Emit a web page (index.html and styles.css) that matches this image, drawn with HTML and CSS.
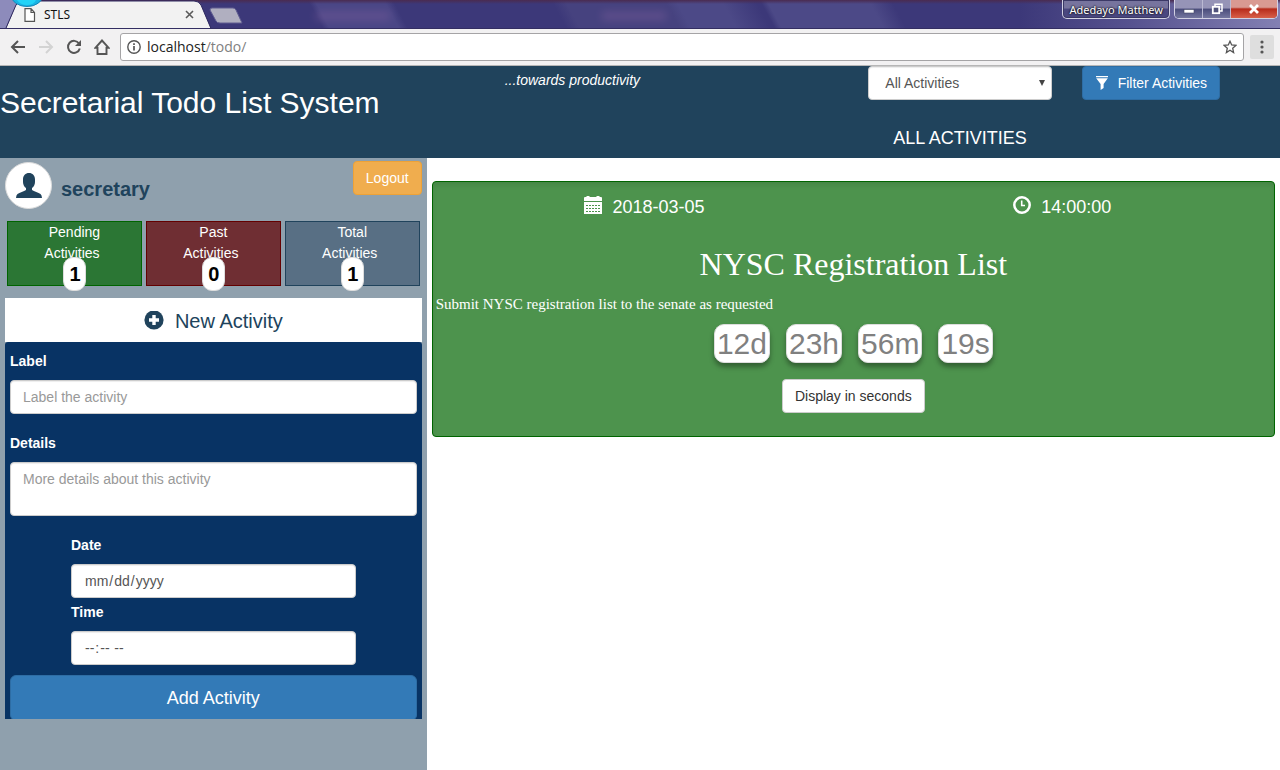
FILE: index.html
```
<!DOCTYPE html>
<html lang="en">
<head>
<meta charset="utf-8">
<title>STLS</title>
<link rel="stylesheet" href="styles.css">
</head>
<body>
<div class="titlebar">
  <div class="tab">
    <svg class="tab-shape" width="246" height="29" viewBox="0 0 246 29" aria-hidden="true">
      <path d="M0 0H18L6 28H0Z" fill="#8d8bbb"/>
      <path d="M6 29C8 24 14 10 16 5Q18 1 22 1H194Q199 1 201 5L211 29Z" fill="#f2f2f2"/>
      <path d="M6 28L16 5Q18 1 22 1H194Q199 1 201 5L211 28.500" fill="none" stroke="#2f2a60"/>
      <ellipse cx="27" cy="-5" rx="16" ry="11.500" fill="#18b4e4" stroke="#1687b8"/>
      <path d="M17 0H36Q34 5 27 5Q20 5 17 0Z" fill="#22d3f7"/>
      <path d="M212 8H233Q235 8 236 10L242 23H220Q217 23 216 21L210 10Q210 8 212 8Z" fill="#b0afc0" stroke="#605d91"/>
    </svg>
    <svg class="tab-icon" width="12" height="14" viewBox="0 0 12 14" aria-hidden="true"><path d="M1 .7H7L10.500 4.500V13.300H1ZM7 .7V4.500H10.500" fill="#fff" stroke="#555" stroke-width="1.200"/></svg>
    <span class="tab-title">STLS</span>
    <button class="tab-close" aria-label="Close tab"><svg width="9" height="9" viewBox="0 0 9 9"><path d="M1 1L8 8M8 1L1 8" stroke="#5a5a5a" stroke-width="1.600"/></svg></button>
  </div>
  <div class="ghost ghost-wide"></div>
  <div class="ghost ghost-narrow"></div>
  <div class="window-buttons">
    <button class="profile">Adedayo Matthew</button>
    <div class="window-group">
      <button class="win" aria-label="Minimize"><svg width="12" height="12" viewBox="0 0 12 12"><rect x="1" y="6.500" width="10" height="3.500" fill="#fff" stroke="#444868" stroke-width=".6"/></svg></button>
      <button class="win" aria-label="Restore"><svg width="12" height="12" viewBox="0 0 12 12"><path d="M4 3V1.200H11V8H9" fill="none" stroke="#fff" stroke-width="1.500"/><rect x="1.800" y="3.800" width="6.400" height="6.400" fill="#50537b" stroke="#fff" stroke-width="1.800"/></svg></button>
      <button class="win win-close" aria-label="Close"><svg width="12" height="12" viewBox="0 0 12 12"><path d="M2 2L10 10M10 2L2 10" stroke="#fff" stroke-width="2.800"/></svg></button>
    </div>
  </div>
</div>
<div class="toolbar">
  <button class="nav" aria-label="Back"><svg width="16" height="16" viewBox="0 0 16 16"><path d="M15 8H2M8 2L2 8L8 14" fill="none" stroke="#555" stroke-width="2"/></svg></button>
  <button class="nav" aria-label="Forward"><svg width="16" height="16" viewBox="0 0 16 16"><path d="M1 8H14M8 2L14 8L8 14" fill="none" stroke="#d3d3d3" stroke-width="2"/></svg></button>
  <button class="nav" aria-label="Reload"><svg width="16" height="16" viewBox="0 0 16 16"><path d="M13 4.500A6 6 0 1 0 13.800 9.500" fill="none" stroke="#555" stroke-width="2"/><path d="M15 1V7H9Z" fill="#555"/></svg></button>
  <button class="nav" aria-label="Home"><svg width="16" height="16" viewBox="0 0 16 16"><path d="M8 1.500L1.500 8.700H3.500V15H12.500V8.700H14.500Z" fill="none" stroke="#555" stroke-width="1.900"/></svg></button>
  <div class="address">
    <svg width="14" height="14" viewBox="0 0 14 14" aria-hidden="true"><circle cx="7" cy="7" r="6.200" fill="none" stroke="#555" stroke-width="1.400"/><path d="M7 6V10.500M7 3.300V4.900" stroke="#555" stroke-width="1.700"/></svg>
    <span class="url">localhost<span class="url-path">/todo/</span></span>
    <svg width="14" height="14" viewBox="0 0 14 14" aria-hidden="true"><path d="M7 1.200L8.700 5L12.800 5.400L9.700 8.200L10.600 12.500L7 10.200L3.400 12.500L4.300 8.200L1.200 5.400L5.300 5Z" fill="none" stroke="#555" stroke-width="1.300"/></svg>
  </div>
  <button class="menu" aria-label="Menu"><svg width="4" height="14" viewBox="0 0 4 14"><circle cx="2" cy="2" r="1.600" fill="#555"/><circle cx="2" cy="7" r="1.600" fill="#555"/><circle cx="2" cy="12" r="1.600" fill="#555"/></svg></button>
</div>
<header class="header">
  <h1 class="brand">Secretarial Todo List System</h1>
  <p class="tagline">...towards productivity</p>
  <div class="filter">
    <div class="select-wrap">
      <select class="field select" aria-label="Activities to show"><option>All Activities</option></select>
      <svg class="caret" width="6" height="6" viewBox="0 0 6 6" aria-hidden="true"><path d="M0 0H6L3 6Z" fill="#444"/></svg>
    </div>
    <h2 class="heading">ALL ACTIVITIES</h2>
  </div>
  <div class="filter-action">
    <button class="btn btn-primary"><svg width="14" height="14" viewBox="0 0 14 14" aria-hidden="true"><path d="M1 0H13V1.200H1ZM1.200 2.200H12.800L8.600 8V12L5.600 14V8Z" fill="#fff"/></svg>Filter Activities</button>
  </div>
</header>
<main class="main">
  <aside class="sidebar">
    <div class="user">
      <span class="avatar"><svg width="26" height="26" viewBox="0 0 26 26" aria-hidden="true"><path d="M13 0C9.500 0 7 2.500 7 6.500V9C7 11.500 8.200 13.800 10 15V17C8 18.500 3.500 19.600 1.500 21Q.2 22 0 25H26Q25.800 22 24.500 21C22.500 19.600 18 18.500 16 17V15C17.800 13.800 19 11.500 19 9V6.500C19 2.500 16.500 0 13 0Z" fill="#20435c"/></svg></span>
      <strong class="username">secretary</strong>
      <button class="btn btn-warning">Logout</button>
    </div>
    <div class="stats">
      <div class="stat stat-pending"><span>Pending</span><span class="stat-second">Activities</span><b class="badge">1</b></div>
      <div class="stat stat-past"><span>Past</span><span class="stat-second">Activities</span><b class="badge">0</b></div>
      <div class="stat stat-total"><span>Total</span><span class="stat-second">Activities</span><b class="badge">1</b></div>
    </div>
    <section class="panel">
      <h2 class="panel-title"><svg width="20" height="20" viewBox="0 0 20 20" aria-hidden="true"><circle cx="10" cy="9" r="9.600" fill="#20435c"/><path d="M10 4V14M5 9H15" stroke="#fff" stroke-width="3.400"/></svg>New Activity</h2>
      <form class="form">
        <div class="group"><label for="label">Label</label><input class="field" id="label" type="text" placeholder="Label the activity"></div>
        <div class="group"><label for="details">Details</label><textarea class="field area" id="details" placeholder="More details about this activity"></textarea></div>
        <div class="when">
          <div class="group"><label for="date">Date</label><input class="field" id="date" type="date"></div>
          <div class="group"><label for="time">Time</label><input class="field" id="time" type="time"></div>
        </div>
        <button class="btn btn-primary btn-large" type="button">Add Activity</button>
      </form>
    </section>
  </aside>
  <section class="content">
    <article class="card">
      <div class="card-meta">
        <span class="meta"><svg width="18" height="18" viewBox="0 0 18 18" aria-hidden="true"><path d="M0 5V2Q0 1 1 1H2.500V0H5.500V1H12.500V0H15.500V1H17Q18 1 18 2V5ZM0 6H18V18H0Z" fill="#fff"/><path d="M2 9.500H16M2 12.500H16M2 15.500H16" stroke="#4d934d" stroke-dasharray="2 1"/></svg>2018-03-05</span>
        <span class="meta"><svg width="18" height="18" viewBox="0 0 18 18" aria-hidden="true"><circle cx="9" cy="9" r="7.700" fill="none" stroke="#fff" stroke-width="2.500"/><path d="M8.700 4.500V9.500H12" fill="none" stroke="#fff" stroke-width="1.600"/></svg>14:00:00</span>
      </div>
      <h2 class="card-title">NYSC Registration List</h2>
      <p class="card-text">Submit NYSC registration list to the senate as requested</p>
      <div class="timers"><span class="timer">12d</span><span class="timer">23h</span><span class="timer">56m</span><span class="timer">19s</span></div>
      <button class="btn btn-default">Display in seconds</button>
    </article>
  </section>
</main>
</body>
</html>
```
FILE: styles.css
```
* { box-sizing: border-box; }

body {
  margin: 0;
  min-height: 100vh;
  display: flex;
  flex-direction: column;
  font-family: "Liberation Sans", Arial, sans-serif;
  font-size: 14px;
  line-height: 20px;
  color: #333;
  background: #fff;
}

h1, h2, p { margin: 0; font-weight: 400; }
button, input, select, textarea { font: inherit; margin: 0; }
svg { display: block; flex: none; }

/* Browser window */
.titlebar {
  position: relative;
  display: flex;
  justify-content: space-between;
  height: 29px;
  overflow: hidden;
  border-bottom: 1px solid #332e62;
  background:
    linear-gradient(180deg, #4a2b50 0, transparent 4px),
    linear-gradient(62deg, transparent 285px, #4a4686 291px, #4a4686 352px, transparent 360px, transparent 500px, #46427f 512px, #46427f 600px, #4c4987 610px, #4c4987 650px, transparent 680px, transparent 684px, #4c4987 690px, #4c4987 780px, transparent 800px),
    linear-gradient(90deg, #3c3879 0, #3c3879 1020px, #56528f 1130px, #8380b3 100%);
}
.tab {
  position: relative;
  display: flex;
  align-items: center;
  width: 246px;
  padding: 1px 52px 0 24px;
}
.tab-shape { position: absolute; left: 0; top: 0; }
.tab-icon, .tab-title, .tab-close { position: relative; }
.tab-title { flex: 1; margin-left: 8px; font: 12px/16px "Noto Sans", sans-serif; color: #111; }
.tab-close { padding: 0; border: 0; background: none; }
.ghost {
  position: absolute;
  top: 12px;
  height: 8px;
  background: #7b5d9a;
  filter: blur(4px);
  opacity: .5;
}
.ghost-wide { left: 316px; width: 74px; }
.ghost-narrow { left: 602px; width: 64px; }
.window-buttons { display: flex; gap: 4px; height: 19px; padding-right: 2px; }
.profile, .window-group {
  border: 1px solid #d2d1e3;
  border-top: 0;
  border-radius: 0 0 5px 5px;
  box-shadow: inset 0 0 0 1px #3b3966;
}
.profile {
  padding: 0 6px;
  font: 11px/17px "Noto Sans", sans-serif;
  color: #fff;
  text-shadow: 0 0 2px #111, 0 0 2px #111;
  background: linear-gradient(#77749e 0 45%, #4a4780 50%);
}
.window-group { display: flex; overflow: hidden; }
.win {
  display: flex;
  align-items: center;
  justify-content: center;
  width: 28px;
  padding: 0;
  border: 0;
  border-right: 1px solid #bab9d2;
  background: linear-gradient(#9694b7 0 45%, #4a4c7b 50%, #74769f);
}
.win-close { width: 46px; border-right: 0; background: linear-gradient(#d99a92 0 40%, #b72c1c 50%, #d8604a); }
.toolbar {
  display: flex;
  align-items: center;
  gap: 12px;
  height: 37px;
  padding: 0 6px 0 10px;
  border-bottom: 1px solid #b6b6b6;
  background: #f2f1f2;
}
.nav { padding: 0; border: 0; background: none; }
.address {
  flex: 1;
  display: flex;
  align-items: center;
  gap: 6px;
  height: 28px;
  margin: 0 -6px 0 -2px;
  padding: 0 6px;
  border: 1px solid #a5a4a6;
  border-radius: 3px;
  background: #fff;
}
.url { flex: 1; font: 14px/20px "Open Sans", sans-serif; color: #222; }
.url-path { color: #808080; }
.menu { display: flex; align-items: center; justify-content: center; width: 24px; height: 24px; padding: 0; border: 0; border-radius: 2px; background: #dedede; }

/* Shared controls */
.btn {
  display: inline-flex;
  align-items: center;
  justify-content: center;
  gap: 8px;
  height: 34px;
  padding: 6px 12px;
  border: 1px solid;
  border-radius: 4px;
  line-height: 20px;
  white-space: nowrap;
}
.btn-primary { color: #fff; background: #337ab7; border-color: #2e6da4; }
.btn-warning { color: #fff; background: #f0ad4e; border-color: #eea236; }
.btn-default { color: #333; background: #fff; border-color: #ccc; }
.btn-large { width: 100%; height: 46px; border-radius: 6px; font-size: 18px; }
.field {
  display: block;
  width: 100%;
  height: 34px;
  padding: 6px 12px;
  border: 1px solid #ccc;
  border-radius: 4px;
  color: #555;
  background: #fff;
  box-shadow: inset 0 1px 1px rgba(0, 0, 0, .075);
}
.field::placeholder { color: #999; }
.field::-webkit-calendar-picker-indicator { display: none; }
.area { height: 54px; resize: none; overflow: hidden; }

/* Page header */
.header {
  display: grid;
  grid-template-columns: 2fr 2fr 1fr 1fr;
  min-height: 92px;
  color: #fff;
  background: #20435c;
}
.brand { padding-top: 20px; font-size: 30px; line-height: 33px; white-space: nowrap; }
.tagline { padding: 4px 0 0 78px; font-style: italic; }
.filter { padding: 0 15px; }
.select-wrap { position: relative; }
.select { appearance: none; padding-left: 16px; }
.caret { position: absolute; right: 7px; top: 14px; }
.heading { margin-top: 28px; font-size: 18px; line-height: 20px; text-align: center; }
.filter-action { padding-left: 15px; }
.filter-action .btn { gap: 9px; }

/* Sidebar */
.main { flex: 1; display: grid; grid-template-columns: 1fr 2fr; }
.sidebar { padding: 3px 5px; background: #8fa0ad; }
.user { display: flex; align-items: flex-start; height: 60px; }
.avatar {
  display: flex;
  align-items: center;
  justify-content: center;
  width: 47px;
  height: 47px;
  margin-top: 1px;
  border: 1px solid #ddd;
  border-radius: 50%;
  background: #fff;
}
.username { flex: 1; padding: 16px 0 0 9px; font-size: 20px; line-height: 24px; color: #20435c; }
.stats { display: grid; grid-template-columns: repeat(3, 1fr); gap: 4px; padding: 0 2px; }
.stat {
  position: relative;
  display: flex;
  flex-direction: column;
  align-items: center;
  height: 65px;
  border: 1px solid;
  line-height: 21px;
  color: #fff;
}
.stat-second { padding-right: 5px; }
.stat-pending { background: #2b7634; border-color: #006400; }
.stat-past { background: #6f2e33; border-color: #640000; }
.stat-total { background: #586f84; border-color: #20435c; }
.badge {
  position: absolute;
  left: calc(50% - 11px);
  bottom: -6px;
  width: 23px;
  height: 34px;
  border: 1px solid #ddd;
  border-radius: 10px;
  font-size: 20px;
  line-height: 32px;
  text-align: center;
  color: #000;
  background: #fff;
}
.panel { margin-top: 12px; }
.panel-title {
  display: flex;
  align-items: center;
  justify-content: center;
  gap: 11px;
  height: 44px;
  padding-top: 1px;
  font-size: 20px;
  color: #20435c;
  background: #fff;
}
.form { height: 377px; padding: 9px 5px 0; overflow: hidden; background: #083364; border-radius: 3px 3px 0 0; }
.group label { display: block; margin-bottom: 9px; font-weight: 700; color: #fff; }
.form > .group { margin-bottom: 19px; }
.when { display: grid; gap: 4px; width: 70%; margin: 0 auto 10px; }

/* Activity card */
.content { padding: 23px 5px; }
.card {
  display: flex;
  flex-direction: column;
  align-items: center;
  padding: 14px 3px 23px;
  border: 1px solid #006400;
  border-radius: 4px;
  color: #fff;
  background: #4d934d;
  box-shadow: inset 0 4px 6px -2px rgba(0, 0, 0, .12);
}
.card-meta { display: grid; grid-template-columns: 1fr 1fr; width: 100%; }
.meta { display: flex; justify-content: center; gap: 10px; font-size: 18px; line-height: 22px; }
.card-title { margin-top: 28px; font: 32px/36px "Liberation Serif", Georgia, serif; }
.card-text { align-self: stretch; margin-top: 12px; font: 15px/20px "Liberation Serif", Georgia, serif; }
.timers { display: flex; gap: 16px; margin: 10px 0 16px; }
.timer {
  height: 39px;
  padding: 0 2px;
  border: 1px solid #ddd;
  border-radius: 10px;
  font-size: 30px;
  line-height: 37px;
  color: #808080;
  background: #fff;
  box-shadow: 0 4px 5px rgba(0, 0, 0, .35);
}
```
